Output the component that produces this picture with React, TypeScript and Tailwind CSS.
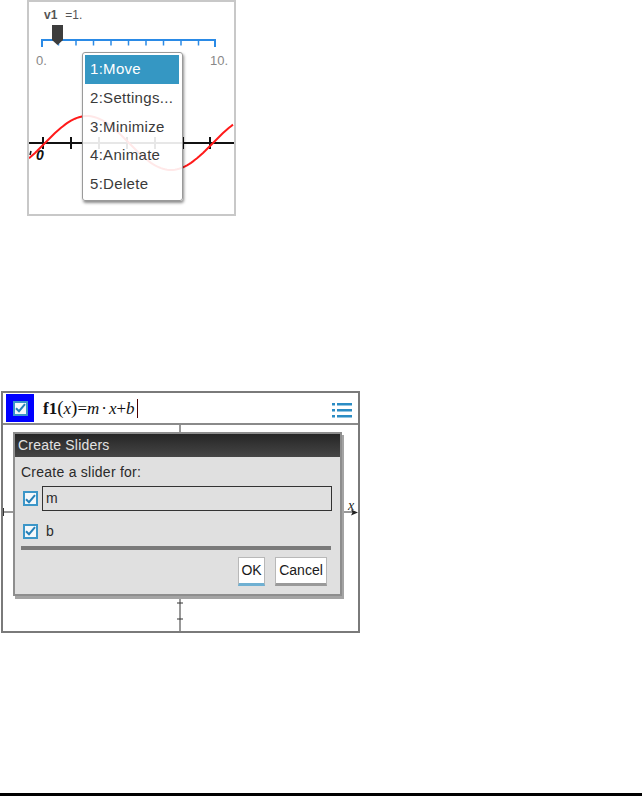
import React from 'react';

const sans = { fontFamily: '"Liberation Sans", Arial, sans-serif' };

const menuItems = ['1:Move', '2:Settings...', '3:Minimize', '4:Animate', '5:Delete'];

function sinePath() {
  const pts: string[] = [];
  for (let x = 29; x <= 234; x += 2) {
    const y = 143 - 27 * Math.sin((2 * Math.PI * (x - 45)) / 168);
    pts.push(`${x},${y.toFixed(1)}`);
  }
  return 'M' + pts.join(' L');
}

function SliderGraph() {
  const sliderTicks = Array.from({ length: 9 }, (_, i) => 41 + 17.5 * (i + 1));
  const axisTicks = [43, 71, 99, 127, 155, 183, 210];
  return (
    <div className="relative ml-[27px] h-[216px] w-[209px] border-2 border-[#c8c8c8] bg-white" style={sans}>
      <svg className="absolute inset-0" width="205" height="212" viewBox="29 2 205 212">
        {/* slider track */}
        <line x1="41" y1="40" x2="216" y2="40" stroke="#2a8ae6" strokeWidth="2" />
        <line x1="42" y1="39" x2="42" y2="47" stroke="#2a8ae6" strokeWidth="2" />
        <line x1="215" y1="39" x2="215" y2="47" stroke="#2a8ae6" strokeWidth="2" />
        {sliderTicks.map((x) => (
          <line key={x} x1={x} y1="40" x2={x} y2="45.5" stroke="#2a8ae6" strokeWidth="1.5" />
        ))}
        <polygon points="52,25 63,25 63,40 57.5,45 52,40" fill="#3d3d3d" />
        {/* graph */}
        <line x1="29" y1="143" x2="234" y2="143" stroke="#111" strokeWidth="2" />
        {axisTicks.map((x) => (
          <line key={x} x1={x} y1="137" x2={x} y2="149" stroke="#111" strokeWidth="2" />
        ))}
        <path d={sinePath()} fill="none" stroke="#ff1a1a" strokeWidth="2" />
        <line x1="31" y1="151" x2="30" y2="155" stroke="#111" strokeWidth="1.5" />
        <text x="36" y="160" fontSize="14" fontStyle="italic" fontWeight="700" fill="#111" style={sans}>
          0
        </text>
      </svg>

      <div className="absolute left-[15px] top-[6px] flex items-center text-[12px] leading-[14px] text-[#555]">
        <span className="font-bold">v1</span>
        <span className="ml-[8px]">=1.</span>
      </div>
      <span className="absolute left-[7px] top-[51px] text-[13px] leading-[15px] text-[#888]">0.</span>
      <span className="absolute left-[181px] top-[51px] text-[13px] leading-[15px] text-[#888]">10.</span>

      <div className="absolute left-[53px] top-[50px] flex h-[149px] w-[101px] flex-col rounded-[3px] border border-[#9a9a9a] bg-white/[0.9] pl-[2px] pr-[3px] pt-[2px] shadow-[1px_2px_3px_rgba(0,0,0,0.45)]">
        {menuItems.map((item, i) => (
          <div
            key={item}
            className={
              i === 0
                ? 'flex h-[29px] items-center bg-[#3597c3] pl-[5px] text-[15px] tracking-[0.3px] text-white'
                : 'flex h-[28.5px] items-center pl-[5px] text-[15px] tracking-[0.3px] text-[#3a3a3a]'
            }
          >
            {item}
          </div>
        ))}
      </div>
    </div>
  );
}

function CheckBox() {
  return (
    <div className="flex h-[15px] w-[15px] items-center justify-center border-2 border-[#3c96c8] bg-[#f4f8fb]">
      <svg width="11" height="10" viewBox="0 0 11 10">
        <path d="M1 5.2 L4 8.2 L10 1.2" fill="none" stroke="#2680b8" strokeWidth="2" />
      </svg>
    </div>
  );
}

function SliderDialog() {
  return (
    <div className="ml-[1px] mt-[175px] flex h-[242px] w-[359px] flex-col border-2 border-[#7a7a7a] bg-white">
      <div className="flex h-[32px] items-start border-b-2 border-[#8a8a8a]">
        <div className="ml-[3px] mt-[1px] flex h-[28px] w-[28px] items-center justify-center bg-[#0000ff]">
          <CheckBox />
        </div>
        <div
          className="ml-[9px] mt-[3px] flex items-baseline text-[17px] leading-[24px] text-[#111]"
          style={{ fontFamily: '"Liberation Serif", "Times New Roman", serif' }}
        >
          <span className="font-bold">f1</span>
          <span className="text-[19px]">(</span>
          <span className="italic">x</span>
          <span className="text-[19px]">)</span>
          <span>=</span>
          <span className="italic">m</span>
          <span className="mx-[2px]">·</span>
          <span className="italic">x</span>
          <span>+</span>
          <span className="italic">b</span>
          <span className="ml-[2px] inline-block h-[19px] w-px self-center bg-[#4a0000]" />
        </div>
        <svg className="ml-auto mr-[6px] mt-[10px]" width="20" height="15" viewBox="0 0 20 15">
          <g fill="#2b8cc4">
            <rect x="0" y="0" width="3" height="2.5" />
            <rect x="5" y="0" width="15" height="2.5" />
            <rect x="0" y="6" width="3" height="2.5" />
            <rect x="5" y="6" width="15" height="2.5" />
            <rect x="0" y="12" width="3" height="2.5" />
            <rect x="5" y="12" width="15" height="2.5" />
          </g>
        </svg>
      </div>

      <div className="relative flex-1">
        <svg className="absolute inset-0" width="355" height="206" viewBox="3 425 355 206">
          <line x1="180" y1="425" x2="180" y2="631" stroke="#333" strokeWidth="1" />
          <line x1="3" y1="512" x2="354" y2="512" stroke="#333" strokeWidth="1" />
          <line x1="3.5" y1="508" x2="3.5" y2="516" stroke="#333" strokeWidth="1" />
          <polygon points="358,512.5 351,509.5 352.5,512.5 351,515.5" fill="#222" />
          <line x1="177" y1="603" x2="183" y2="603" stroke="#333" strokeWidth="1" />
          <line x1="177" y1="619" x2="183" y2="619" stroke="#333" strokeWidth="1" />
          <text
            x="348"
            y="510"
            fontSize="14"
            fontStyle="italic"
            fill="#222"
            style={{ fontFamily: '"Liberation Serif", serif' }}
          >
            x
          </text>
        </svg>

        <div
          className="absolute left-[10px] top-[7px] flex h-[164px] w-[329px] flex-col border-2 border-[#8e8e8e] bg-[#e0e0e0] shadow-[2px_3px_0_#a4a4a4]"
          style={sans}
        >
          <div className="flex h-[23px] items-center bg-gradient-to-b from-[#262626] to-[#464646] pl-[3px] text-[14px] tracking-[0.2px] text-[#e2e2e2]">
            Create Sliders
          </div>
          <div className="flex flex-1 flex-col px-[6px] pt-[7px] text-[14px] text-[#2a2a2a]">
            <div className="leading-[16px] tracking-[0.25px]">Create a slider for:</div>
            <div className="mt-[6px] flex h-[25px] items-center">
              <div className="ml-[2px]">
                <CheckBox />
              </div>
              <div className="ml-[4px] flex h-[25px] w-[290px] items-center border border-[#333] pl-[3px]">m</div>
            </div>
            <div className="mt-[12px] flex h-[16px] items-center">
              <div className="ml-[2px]">
                <CheckBox />
              </div>
              <span className="ml-[8px]">b</span>
            </div>
            <div className="mt-[7px] h-[4px] w-[310px] bg-[#7a7a7a]" />
            <div className="mt-[7px] flex justify-end gap-[10px] pr-[7px]">
              <button className="flex h-[29px] w-[27px] items-center justify-center border border-[#b8b8b8] border-b-[3px] border-b-[#6fb0d2] bg-white text-[14px] text-[#1a1a1a]">
                OK
              </button>
              <button className="flex h-[29px] w-[52px] items-center justify-center border border-[#b8b8b8] border-b-[3px] border-b-[#9a9a9a] bg-white text-[14px] text-[#1a1a1a]">
                Cancel
              </button>
            </div>
          </div>
        </div>
      </div>
    </div>
  );
}

export default function App() {
  return (
    <div className="flex h-[796px] w-[642px] flex-col bg-white">
      <SliderGraph />
      <SliderDialog />
      <div className="mt-auto h-[3px] w-full bg-black" />
    </div>
  );
}
